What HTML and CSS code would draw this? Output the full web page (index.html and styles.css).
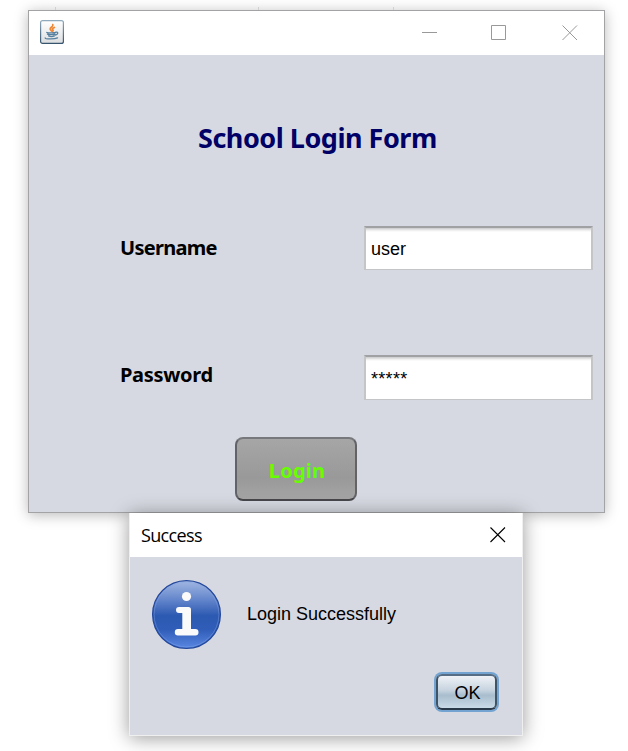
FILE: index.html
```html
<!DOCTYPE html>
<html lang="en">
<head>
<meta charset="utf-8">
<title>School Login Form</title>
<link rel="stylesheet" href="styles.css">
</head>
<body>
<div class="ticks"><i></i><i></i><i></i></div>
<main class="window">
  <header class="titlebar">
    <svg class="java" width="24" height="24" viewBox="0 0 24 24">
      <defs>
        <linearGradient id="jb" x2="0" y2="1"><stop offset="0" stop-color="#8fa9bd"/><stop offset="1" stop-color="#36546e"/></linearGradient>
        <linearGradient id="jf" x2="0" y2="1"><stop offset="0" stop-color="#fff"/><stop offset="1" stop-color="#dcdddf"/></linearGradient>
      </defs>
      <rect x=".6" y=".6" width="22.8" height="22.8" rx="2" fill="url(#jf)" stroke="url(#jb)" stroke-width="1.2"/>
      <g fill="none" stroke-linecap="round">
        <path d="M12.800 4.600c.9 2.300-4 3.200-2.300 5.200l1 1.200M14.400 7.500c-2.300 1-2.300 1.700-1.400 2.500.4.500 0 1-.5 1.300" stroke="#ee8634" stroke-width="1.700"/>
        <path d="M6.800 12.400c1 .8 7.500.7 9 0M7.500 14.200c1.400.7 6 .6 7.500 0M8.600 15.900c1.300.6 4.500.6 5.800 0M15.800 12.200c3-.6 2.300 2.300-.3 3M5.200 17.900c0 1.200 9.500 1.400 12.300 0" stroke="#557f9f" stroke-width="1.300"/>
      </g>
    </svg>
    <svg class="controls" width="156" height="16" viewBox="0 0 156 16" fill="none" stroke="#999">
      <path d="M0 7.500h15M69.500.500h14v14h-14z"/><path d="M140.500.500l14.500 14.500M155 .500L140.500 15"/>
    </svg>
  </header>
  <form class="form">
    <h1>School Login Form</h1>
    <div class="row"><label for="u">Username</label><input id="u" type="text" value="user"></div>
    <div class="row password"><label for="p">Password</label><input id="p" type="text" value="*****"></div>
    <button class="login" type="button">Login</button>
  </form>
</main>
<section class="dialog">
  <header class="dialog-bar"><span>Success</span>
    <svg width="16" height="16" viewBox="0 0 16 16" fill="none" stroke="#000" stroke-width="1.100"><path d="M.500.500l14.500 14.500M15 .500L.500 15"/></svg>
  </header>
  <div class="dialog-body">
    <div class="message">
      <svg width="70" height="70" viewBox="0 0 70 70">
        <defs><linearGradient id="info" x2="0" y2="1"><stop offset="0" stop-color="#a2b8e2"/><stop offset=".3" stop-color="#5f82ca"/><stop offset=".52" stop-color="#2c59b1"/><stop offset=".72" stop-color="#2f5db8"/><stop offset="1" stop-color="#5987e2"/></linearGradient></defs>
        <circle cx="34.500" cy="34.500" r="33.900" fill="url(#info)" stroke="#23479b" stroke-width="1.200"/>
        <circle cx="34.500" cy="34.500" r="32.400" fill="none" stroke="#84a5e6" stroke-opacity=".4"/>
        <circle cx="34.500" cy="16.500" r="4.600" fill="#fafafa"/>
        <path d="M27 27h9.500q2.500 0 2.500 2.500v19.500h4.300a3.200 3.200 0 0 1 0 6.400H26a3.200 3.200 0 0 1 0-6.400h4.300V33H27a3 3 0 0 1 0-6z" fill="#fafafa"/>
      </svg>
      <span>Login Successfully</span>
    </div>
    <button class="ok" type="button">OK</button>
  </div>
</section>
</body>
</html>
```

FILE: styles.css
```css
* { box-sizing: border-box; }
body { margin: 0; width: 628px; height: 751px; overflow: hidden; background: #fff; position: relative; padding: 10px 0 0 28px; }
.ticks i { position: absolute; top: 7px; left: 55px; width: 1px; height: 3px; background: #d0d0d0; }
.ticks i:nth-child(2) { left: 258px; }
.ticks i:nth-child(3) { left: 393px; }
.window { width: 577px; height: 503px; border: 1px solid #a3a3a5; background: #d6d9e1; box-shadow: 0 2px 13px rgba(0,0,0,.28); }
.titlebar { height: 44px; background: #fff; display: flex; justify-content: space-between; padding: 9px 26px 0 11px; }
.controls { margin-top: 5px; }
.form { display: flow-root; margin: 0; }
h1, label, .login { font-family: "Noto Sans", sans-serif; font-weight: 700; }
h1 { margin: 64px 0 0 169px; color: #000066; font-size: 27px; line-height: 38px; letter-spacing: -.48px; white-space: nowrap; }
.row { display: flex; align-items: center; height: 44px; margin: 69px 11px 0 90px; }
.row.password { height: 45px; margin-top: 85px; }
label { width: 245px; padding-left: 1px; font-size: 20px; line-height: 26px; letter-spacing: -.7px; color: #000; }
.password label { margin-top: -6px; letter-spacing: -.3px; }
input { width: 229px; height: 44px; margin: 0; padding: 2px 5px 0; border: 1px solid #c4c5c7; border-width: 2px 2px 1px; border-top-color: #9fa1a3; border-radius: 0; background: linear-gradient(#c9cacc, #f0f0f0 2.5px, #fff 4px); background-origin: padding-box; outline: 0; font: 18px "Liberation Sans", Arial, sans-serif; color: #000; }
.password input { height: 45px; letter-spacing: .3px; }
.login { display: block; width: 122px; height: 64px; margin: 37px 0 0 206px; padding: 2px 0 0 2px; border: 2px solid #4e4e53; border-color: #77787c #626267 #46464b; border-radius: 8px; background: linear-gradient(#a6a6a6, #999 65%, #a5a5a5); color: #66ff00; font-size: 20px; letter-spacing: .2px; }
.dialog { position: absolute; left: 129px; top: 513px; width: 394px; height: 223px; border: 1px solid #efeff0; border-top: 0; background: #d6d9e1; box-shadow: 0 2px 18px rgba(0,0,0,.4); }
.dialog-bar { display: flex; justify-content: space-between; height: 44px; padding: 9px 16px 0 11px; background: #fff; font: 18px/28px "Open Sans", "Noto Sans", sans-serif; letter-spacing: -.65px; }
.dialog-bar span { margin-top: -1px; }
.dialog-bar svg { margin-top: 5px; }
.dialog-body { padding: 23px 25px 0 22px; }
.message { display: flex; align-items: center; gap: 25px; font: 18px "Liberation Sans", Arial, sans-serif; letter-spacing: 0; }
.message span { white-space: nowrap; margin-top: -2px; }
.ok { display: block; width: 61px; height: 36px; margin: 24px 0 0 auto; padding: 3px 0 0 2px; border: 2px solid #35495d; border-color: #566d83 #3d5368 #29394a; border-radius: 6px; background: linear-gradient(#eff2f6, #c6d3df 45%, #a8bdcd 60%, #c9dae8); box-shadow: 0 0 0 2px #72a3d1; font: 18px "Liberation Sans", Arial, sans-serif; color: #000; }
```
